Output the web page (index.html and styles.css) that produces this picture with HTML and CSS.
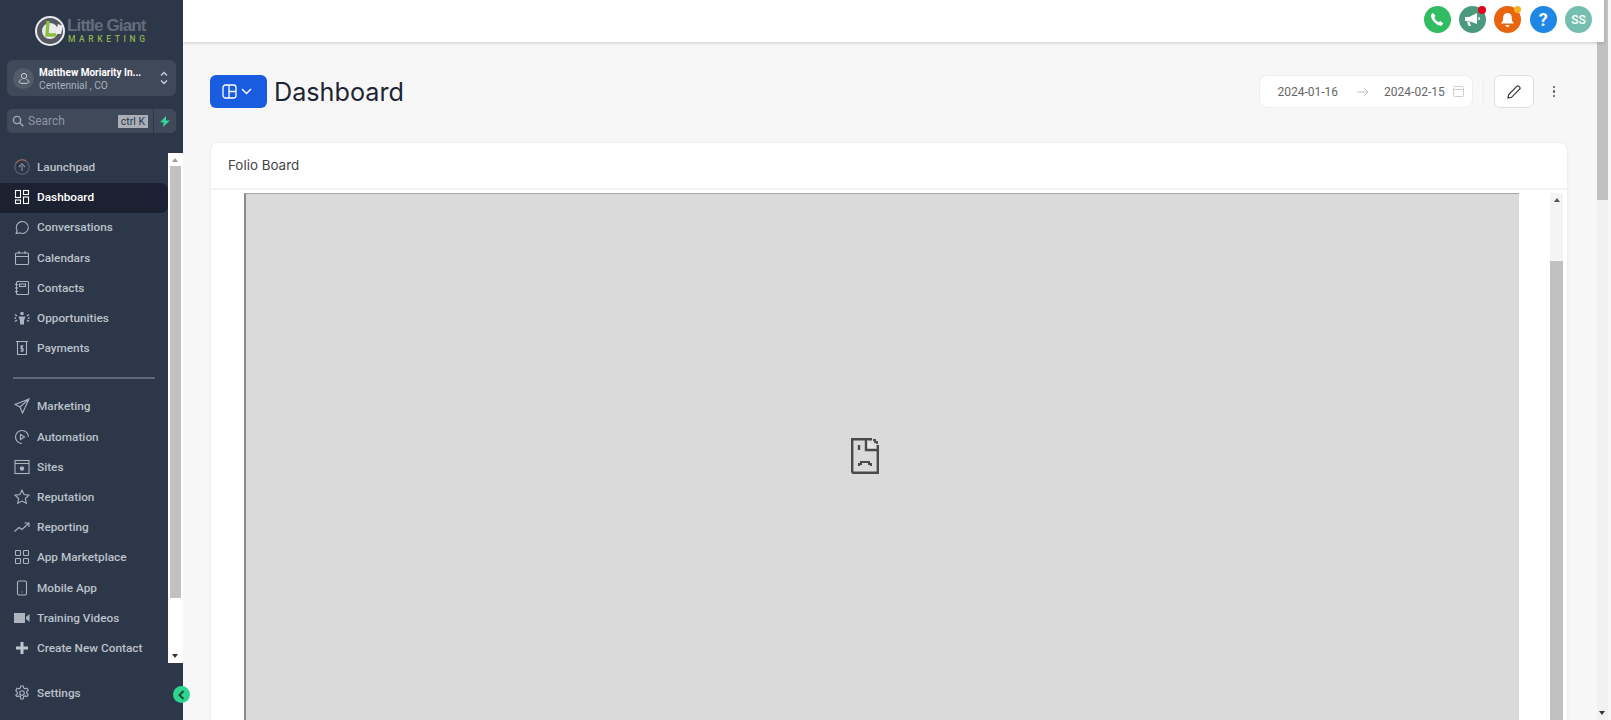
FILE: index.html
```html
<!DOCTYPE html>
<html lang="en">
<head>
    <meta charset="UTF-8">
    <meta name="viewport" content="width=device-width, initial-scale=1.0">
    <title>Dashboard - Little Giant Marketing</title>
    <link rel="stylesheet" href="styles.css">
</head>
<body>
    <aside class="sidebar">
        <div class="logo">
            <svg class="logo-mark" width="32" height="32" viewBox="0 0 32 32">
                <circle cx="16" cy="16" r="15" fill="#e9ebee"/>
                <circle cx="16" cy="16" r="10.5" fill="none" stroke="#555a60" stroke-width="5"/>
                <path d="M24 9l5 2-2 8h-6z" fill="#e9ebee"/>
                <path d="M14 6l-1 14h9" fill="none" stroke="#8cbf3f" stroke-width="3.4"/>
            </svg>
            <div class="logo-text">
                <div class="logo-name">Little Giant</div>
                <div class="logo-sub">MARKETING</div>
            </div>
        </div>

        <div class="location">
            <span class="location-pin">
                <svg width="12" height="12" viewBox="0 0 12 12" fill="none" stroke="#c9ced6" stroke-width="1">
                    <circle cx="6" cy="4" r="2.6"/>
                    <path d="M3.5 7.5C2 8 1 9 1 10c0 .8 2 1.4 5 1.4s5-.6 5-1.4c0-1-1-2-2.5-2.5"/>
                </svg>
            </span>
            <div class="location-text">
                <div class="location-name">Matthew Moriarity In...</div>
                <div class="location-city">Centennial , CO</div>
            </div>
            <svg class="location-arrows" width="8" height="14" viewBox="0 0 8 14" fill="none" stroke="#c9ced6" stroke-width="1.4">
                <path d="M1 4.5l3-3 3 3M1 9.5l3 3 3-3"/>
            </svg>
        </div>

        <div class="search-row">
            <div class="search">
                <svg width="12" height="12" viewBox="0 0 12 12" fill="none" stroke="#a4abb6" stroke-width="1.4">
                    <circle cx="5" cy="5" r="3.6"/>
                    <path d="M7.7 7.7L11.3 11.3"/>
                </svg>
                <span class="search-label">Search</span>
                <span class="search-key">ctrl K</span>
            </div>
            <div class="search-bolt">
                <svg width="10" height="11" viewBox="0 0 10 11"><path d="M6 0L0 6.2h3.6L3 11l7-6.6H6z" fill="#37d399"/></svg>
            </div>
        </div>

        <div class="nav">
            <div class="nav-list">
                <a class="nav-item">
                    <svg class="nav-icon" viewBox="0 0 16 16">
                        <circle cx="8" cy="8" r="7.2" stroke="#5d6675"/>
                        <path d="M2 4A7.2 7.2 0 0 1 12 2" stroke="#a8654c"/>
                        <path d="M8 12V7M5 8l3-3.2L11 8" stroke="#8a92a0"/>
                    </svg>
                    Launchpad
                </a>
                <a class="nav-item active">
                    <svg class="nav-icon" viewBox="0 0 16 16">
                        <rect x="1.5" y="1.5" width="5" height="7"/><rect x="9.5" y="1.5" width="5" height="4"/>
                        <rect x="1.5" y="11" width="5" height="3.5"/><rect x="9.5" y="8" width="5" height="6.5"/>
                    </svg>
                    Dashboard
                </a>
                <a class="nav-item">
                    <svg class="nav-icon" viewBox="0 0 16 16">
                        <path d="M2.2 14.5l.9-3A6 6 0 1 1 5.500 13.800z"/>
                    </svg>
                    Conversations
                </a>
                <a class="nav-item">
                    <svg class="nav-icon" viewBox="0 0 16 16">
                        <rect x="1.500" y="3" width="13" height="11.500" rx="1"/>
                        <path d="M1.500 6.500h13M5 1v3M11 1v3"/>
                    </svg>
                    Calendars
                </a>
                <a class="nav-item">
                    <svg class="nav-icon" viewBox="0 0 16 16">
                        <rect x="2.500" y="1.500" width="12" height="13" rx="1"/>
                        <rect x="5.500" y="4" width="6" height="2.500"/>
                        <path d="M1 4.500h3M1 8h3M1 11.500h3"/>
                    </svg>
                    Contacts
                </a>
                <a class="nav-item">
                    <svg class="nav-icon" viewBox="0 0 16 16">
                        <circle cx="8" cy="3.500" r="1.800" class="solid"/>
                        <path d="M4.500 6.500h7l-1.500 4v4H6v-4z" class="solid"/>
                        <path d="M1 4.500l2 1.500M1 11.500l2-1.500M15 4.500l-2 1.500M15 11.500l-2-1.500M.5 8h1.500M14 8h1.500" stroke-width="1.500"/>
                    </svg>
                    Opportunities
                </a>
                <a class="nav-item">
                    <svg class="nav-icon" viewBox="0 0 16 16">
                        <path d="M2 1.500h12M3.500 1.500v13h9v-13"/>
                        <path d="M9.500 6H7v2.500h2V11H6.500M8 5v7"/>
                    </svg>
                    Payments
                </a>

                <div class="nav-divider"></div>

                <a class="nav-item">
                    <svg class="nav-icon" viewBox="0 0 16 16">
                        <path d="M15 1L1 6.500l5 2.500 2.500 6zM6 9l9-8"/>
                    </svg>
                    Marketing
                </a>
                <a class="nav-item">
                    <svg class="nav-icon" viewBox="0 0 16 16">
                        <path d="M14.500 8A6.500 6.500 0 1 0 8 14.500M4.500 2.500"/>
                        <path d="M6.500 5.500l4 2.500-4 2.500z"/>
                    </svg>
                    Automation
                </a>
                <a class="nav-item">
                    <svg class="nav-icon" viewBox="0 0 16 16">
                        <rect x="1" y="1.500" width="14" height="13"/>
                        <path d="M1 4.500h14"/>
                        <circle cx="8" cy="9.500" r="2.200" class="solid"/>
                    </svg>
                    Sites
                </a>
                <a class="nav-item">
                    <svg class="nav-icon" viewBox="0 0 16 16">
                        <path d="M8 1.200l2.100 4.400 4.900.6-3.600 3.300.9 4.800L8 12l-4.300 2.300.9-4.800L1 6.200l4.900-.6z"/>
                    </svg>
                    Reputation
                </a>
                <a class="nav-item">
                    <svg class="nav-icon" viewBox="0 0 16 16">
                        <path d="M.5 12.500L5 8.500l3 2 6.500-6M10.500 4h4.500v4"/>
                    </svg>
                    Reporting
                </a>
                <a class="nav-item">
                    <svg class="nav-icon" viewBox="0 0 16 16">
                        <rect x="1.500" y="1.500" width="5" height="5" rx=".8"/><rect x="9.500" y="1.500" width="5" height="5" rx=".8"/>
                        <rect x="1.500" y="9.500" width="5" height="5" rx=".8"/><rect x="9.500" y="9.500" width="5" height="5" rx=".8"/>
                    </svg>
                    App Marketplace
                </a>
                <a class="nav-item">
                    <svg class="nav-icon" viewBox="0 0 16 16">
                        <rect x="3.500" y="1" width="9" height="14" rx="1.500"/>
                        <path d="M7.500 12h1"/>
                    </svg>
                    Mobile App
                </a>
                <a class="nav-item">
                    <svg class="nav-icon" viewBox="0 0 16 16">
                        <rect x="0" y="3" width="11" height="10" class="solid"/>
                        <path d="M12 7l3.500-3v8L12 9z" class="solid"/>
                    </svg>
                    Training Videos
                </a>
                <a class="nav-item">
                    <svg class="nav-icon" viewBox="0 0 16 16">
                        <path d="M8 2v12M2 8h12" class="thick"/>
                    </svg>
                    Create New Contact
                </a>
            </div>
            <div class="nav-scroll">
                <span class="arrow-up"></span>
                <div class="nav-thumb"></div>
                <span class="arrow-down"></span>
            </div>
        </div>

        <a class="nav-item settings">
            <svg class="nav-icon" viewBox="0 0 16 16">
                <circle cx="8" cy="8" r="2.300"/>
                <path d="M6.800 1h2.400l.4 2 1.500.8 1.900-.7 1.200 2.100-1.500 1.300v1.700l1.500 1.300-1.200 2.100-1.900-.7-1.500.8-.4 2.300H6.800l-.4-2.300-1.500-.8-1.900.7L1.800 10l1.500-1.300V7L1.800 5.700 3 3.100l1.900.7 1.500-.8z"/>
            </svg>
            Settings
        </a>
        <span class="collapse">
            <svg width="7" height="10" viewBox="0 0 7 10" fill="none" stroke="#1d4a3a" stroke-width="2"><path d="M5.500 1l-4 4 4 4"/></svg>
        </span>
    </aside>

    <main class="page">
        <header class="topbar">
            <span class="circle phone">
                <svg width="15" height="15" viewBox="0 0 15 15"><path d="M3.200 1l2.300 3-1.200 1.600c.8 2 2.300 3.600 4.400 4.600l1.500-1.300 3 2.300c-.5 1.500-1.600 2.600-2.800 2.600C6 13.300 1 7.500 1 3.500 1 2.500 2 1.400 3.200 1z" fill="#fff"/></svg>
            </span>
            <span class="circle megaphone">
                <svg width="17" height="15" viewBox="0 0 17 15"><path d="M1 5h4l8-4v11L5 9H1zM3 9.500h2.500L7 14H4.500z" fill="#fff"/><path d="M15 5v3" stroke="#fff" stroke-width="1.500"/></svg>
                <span class="dot red"></span>
            </span>
            <span class="circle bell">
                <svg width="15" height="16" viewBox="0 0 15 16"><path d="M7.500 1c3 0 4.300 2.300 4.300 5 0 2.500.7 3.500 2.200 5.500H1C2.500 9.500 3.200 8.500 3.200 6c0-2.700 1.300-5 4.300-5zM5.500 13h4a2 2 0 0 1-4 0z" fill="#fff"/></svg>
                <span class="dot yellow"></span>
            </span>
            <span class="circle help">?</span>
            <span class="circle avatar">SS</span>
        </header>

        <div class="content">
            <div class="page-head">
                <button class="view-btn">
                    <svg width="15" height="15" viewBox="0 0 15 15" fill="none" stroke="#fff" stroke-width="1.300">
                        <rect x="1" y="1" width="13" height="13" rx="2.500"/>
                        <path d="M7 1v13M7 7.500h7"/>
                    </svg>
                    <svg width="11" height="7" viewBox="0 0 11 7" fill="none" stroke="#fff" stroke-width="1.400">
                        <path d="M1 1l4.500 4.500L10 1"/>
                    </svg>
                </button>
                <h1>Dashboard</h1>
                <div class="head-tools">
                    <div class="date-range">
                        <span>2024-01-16</span>
                        <svg class="date-arrow" width="12" height="10" viewBox="0 0 12 10" fill="none" stroke="#c4c4c4" stroke-width="1">
                            <path d="M0 5h11M7 1l4 4-4 4"/>
                        </svg>
                        <span>2024-02-15</span>
                        <svg class="date-icon" width="11" height="11" viewBox="0 0 11 11" fill="none" stroke="#cfcfcf" stroke-width="1">
                            <rect x=".5" y=".5" width="10" height="10" rx="1"/>
                            <path d="M.5 3.500h10"/>
                        </svg>
                    </div>
                    <span class="tools-sep"></span>
                    <button class="edit-btn">
                        <svg width="14" height="14" viewBox="0 0 14 14" fill="none" stroke="#333" stroke-width="1.200">
                            <path d="M1 13l.7-3.500L9.800 1.400a1.500 1.500 0 0 1 2.100 0l.7.700a1.500 1.500 0 0 1 0 2.100L4.500 12.300z"/>
                        </svg>
                    </button>
                    <span class="kebab"><i></i><i></i><i></i></span>
                </div>
            </div>

            <section class="card">
                <div class="card-title">Folio Board</div>
                <div class="card-body">
                    <div class="frame">
                        <svg class="broken" width="28" height="36" viewBox="0 0 28 36" fill="none" stroke="#4a4a4a" stroke-width="2.400">
                            <path d="M1.200 34.800V1.200H21M26.800 7V34.800H1.200"/>
                            <path d="M15 1V12H27" fill="#e6e6e6"/>
                            <path d="M22 2h2v2h2v2" stroke-width="1.800"/>
                            <path d="M8 7v5" stroke-width="2.400"/>
                            <path d="M8 28v-2h2v-2h8v2h2v2" stroke-width="2"/>
                        </svg>
                    </div>
                    <div class="frame-scroll">
                        <span class="arrow-up"></span>
                        <div class="frame-thumb"></div>
                    </div>
                </div>
            </section>
        </div>

        <div class="page-scroll">
            <div class="page-thumb"></div>
            <span class="arrow-down"></span>
        </div>
    </main>
</body>
</html>
```

FILE: styles.css
```css
* {
    box-sizing: border-box;
}
html, body {
    height: 720px;
}
body {
    margin: 0;
    display: flex;
    overflow: hidden;
    font-family: Roboto, sans-serif;
    background: #f7f7f7;
}

/* sidebar */
.sidebar {
    position: relative;
    z-index: 3;
    width: 183px;
    flex-shrink: 0;
    background: #2c3749;
}
.logo {
    height: 60px;
    padding: 15px 0 0 34px;
    display: flex;
    gap: 1px;
}
.logo-text {
    padding-top: 2px;
}
.logo-name {
    font-family: "Liberation Sans", sans-serif;
    font-size: 17px;
    line-height: 17px;
    font-weight: bold;
    letter-spacing: -0.85px;
    color: #656d7b;
}
.logo-sub {
    font-size: 8.5px;
    line-height: 10px;
    font-weight: 500;
    letter-spacing: 3.6px;
    color: #8fb24c;
    padding-left: 1px;
}
.location {
    margin: 0 7px;
    height: 36px;
    padding: 0 8px 0 6px;
    display: flex;
    align-items: center;
    background: #3f4959;
    border-radius: 6px;
}
.location-pin {
    width: 21px;
    height: 21px;
    border-radius: 50%;
    background: #515b6a;
    display: flex;
    align-items: center;
    justify-content: center;
}
.location-text {
    margin-left: 5px;
    padding-top: 3px;
    flex: 1;
    font-size: 10.2px;
    line-height: 12.5px;
}
.location-name {
    font-size: 10px;
    font-weight: 700;
    color: #fff;
}
.location-city {
    color: #aab1bc;
}
.search-row {
    margin: 13px 7px 0;
    height: 24px;
    display: flex;
}
.search {
    width: 146px;
    padding: 0 5px;
    display: flex;
    align-items: center;
    background: #3f4959;
    border-radius: 5px 0 0 5px;
}
.search-label {
    margin-left: 4px;
    flex: 1;
    font-size: 12px;
    color: #8e96a3;
}
.search-key {
    height: 13px;
    padding: 0 3px;
    font-size: 10.5px;
    line-height: 13px;
    color: #2c3749;
    background: #a9aeb8;
}
.search-bolt {
    flex: 1;
    display: flex;
    align-items: center;
    justify-content: center;
    background: #3f4959;
    border-left: 1px solid #2c3749;
    border-radius: 0 5px 5px 0;
}
.nav {
    margin-top: 20px;
    height: 510px;
    display: flex;
}
.nav-list {
    width: 168px;
}
.nav-item {
    height: 30.2px;
    padding: 0 0 2px 14px;
    display: flex;
    align-items: center;
    gap: 7px;
    font-size: 11.8px;
    font-weight: 500;
    color: #bcc1cb;
}
.nav-item.active {
    color: #fff;
    background: #1b2130;
    border-radius: 0 7px 7px 0;
}
.nav-item.settings {
    margin-top: 16px;
}
.nav-icon {
    width: 16px;
    height: 16px;
    flex-shrink: 0;
    fill: none;
    stroke: #aeb4be;
    stroke-width: 1.1;
}
.active .nav-icon {
    stroke: #fff;
}
.nav-icon .solid {
    fill: #aeb4be;
    stroke: none;
}
.nav-icon .thick {
    stroke: #c0c5ce;
    stroke-width: 3;
}
.nav-divider {
    margin: 13px 13px 13px;
    height: 2px;
    background: #5e6878;
}
.nav-scroll {
    position: relative;
    width: 15px;
    padding-top: 13px;
    background: #fff;
}
.nav-thumb {
    margin: 0 2px;
    height: 432px;
    background: #c1c1c1;
}
.nav-scroll .arrow-up {
    position: absolute;
    top: 5px;
    left: 4px;
    border-bottom-color: #a0a0a0;
}
.nav-scroll .arrow-down {
    position: absolute;
    bottom: 5px;
    left: 4px;
}
.arrow-up {
    display: block;
    width: 0;
    border: 3.5px solid transparent;
    border-top: 0;
    border-bottom: 4px solid #555;
}
.arrow-down {
    display: block;
    width: 0;
    border: 3.5px solid transparent;
    border-bottom: 0;
    border-top: 4px solid #333;
}
.collapse {
    position: absolute;
    left: 173px;
    top: 686px;
    width: 17px;
    height: 17px;
    display: flex;
    align-items: center;
    justify-content: center;
    border-radius: 50%;
    background: #2ed48f;
}

/* main area */
.page {
    position: relative;
    flex: 1;
    min-width: 0;
}
.topbar {
    position: relative;
    z-index: 2;
    height: 42px;
    margin-right: 7px;
    padding-right: 12px;
    display: flex;
    justify-content: flex-end;
    align-items: center;
    gap: 8.3px;
    background: #fff;
    box-shadow: 0 1px 3px rgba(0,0,0,0.18);
}
.circle {
    position: relative;
    width: 27px;
    height: 27px;
    margin-top: -3px;
    display: flex;
    align-items: center;
    justify-content: center;
    border-radius: 50%;
    color: #fff;
    font-weight: 700;
}
.phone { background: #31bb62; }
.megaphone { background: #4c9a7d; }
.bell { background: #e8640f; }
.help { background: #1f87e6; font-size: 18px; }
.avatar { background: #76bfb0; font-size: 12px; font-weight: 500; }
.dot {
    position: absolute;
    top: 0;
    right: 0;
    width: 8px;
    height: 8px;
    border-radius: 50%;
}
.dot.red { background: #e0001b; }
.dot.yellow { background: #f3b21d; width: 7px; height: 7px; }

.content {
    padding: 33px 43px 0 27px;
}
.page-head {
    height: 33px;
    display: flex;
    align-items: center;
}
.view-btn {
    width: 57px;
    height: 33px;
    padding: 0 4px 0 0;
    display: flex;
    align-items: center;
    justify-content: center;
    gap: 4px;
    border: none;
    border-radius: 6px;
    background: #1a5ce0;
}
h1 {
    margin: 0 0 0 7px;
    font-family: Inter, sans-serif;
    font-size: 25.2px;
    font-weight: 400;
    color: #1d2433;
}
.head-tools {
    margin-left: auto;
    margin-right: 13px;
    display: flex;
    align-items: center;
}
.date-range {
    width: 214px;
    height: 33px;
    padding: 0 0 0 18px;
    display: flex;
    align-items: center;
    white-space: nowrap;
    font-size: 12px;
    color: #666;
    background: #fff;
    border: 1px solid #eeeeee;
    border-radius: 8px;
}
.date-arrow {
    margin: 0 15px 0 19px;
    flex-shrink: 0;
}
.date-icon {
    margin-left: 8px;
    flex-shrink: 0;
}
.tools-sep {
    margin: 0 10px;
    width: 1px;
    height: 24px;
    background: #efefef;
}
.edit-btn {
    width: 40px;
    height: 33px;
    padding: 0;
    display: flex;
    align-items: center;
    justify-content: center;
    background: #fff;
    border: 1px solid #dfdfdf;
    border-radius: 6px;
}
.kebab {
    margin-left: 19px;
    display: flex;
    flex-direction: column;
    gap: 2px;
}
.kebab i {
    width: 2.5px;
    height: 2.5px;
    border-radius: 50%;
    background: #555;
}
.card {
    margin-top: 34px;
    height: 620px;
    background: #fff;
    border: 1px solid #efefef;
    border-radius: 8px;
    box-shadow: 0 1px 3px rgba(0,0,0,0.04);
}
.card-title {
    height: 47px;
    padding: 0 0 2px 17px;
    display: flex;
    align-items: center;
    font-family: Inter, sans-serif;
    font-size: 13.4px;
    color: #444;
    border-bottom: 2px solid #f3f3f3;
}
.card-body {
    padding: 3px 4px 0 33px;
    display: flex;
    justify-content: space-between;
}
.frame {
    width: 1275px;
    height: 570px;
    padding: 244px 0 0 605px;
    background: #dadada;
    border-left: 2px solid #8a8a8a;
    border-top: 1px solid #a8a8a8;
}
.broken {
    display: block;
}
.frame-scroll {
    position: relative;
    width: 13px;
    padding-top: 68px;
    background: #f4f4f4;
}
.frame-scroll .arrow-up {
    position: absolute;
    top: 5px;
    left: 4px;
}
.frame-thumb {
    height: 500px;
    background: #c1c1c1;
}
.page-scroll {
    position: absolute;
    top: 0;
    right: 3px;
    bottom: 0;
    width: 11px;
    background: #f1f1f1;
}
.page-thumb {
    height: 200px;
    background: #c1c1c1;
}
.page-scroll .arrow-down {
    position: absolute;
    bottom: 5px;
    left: 2px;
}
```
